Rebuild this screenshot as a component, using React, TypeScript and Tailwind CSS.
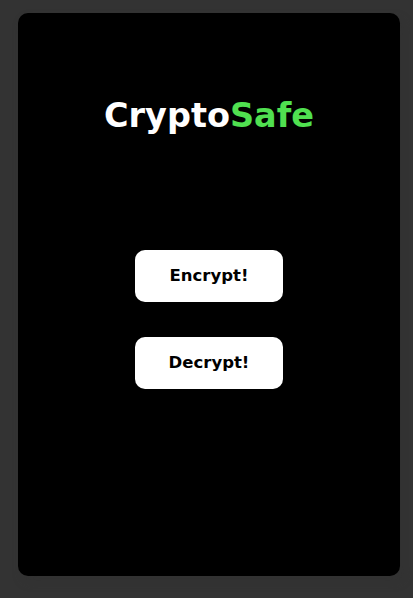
export default function App() {
  return (
    <div className="min-h-screen w-full bg-[#333333] pl-[18px] pt-[13px]" style={{ fontFamily: '"DejaVu Sans", sans-serif' }}>
      <div className="flex h-[563px] w-[382px] flex-col items-center rounded-[10px] bg-black shadow-[4px_6px_8px_rgba(50,50,50,0.6)]">
        {/* Title */}
        <h1 className="mt-[83px] h-[40px] text-[33.5px] font-bold leading-[40px] text-white">
          Crypto<span className="text-[#50e050]">Safe</span>
        </h1>

        {/* Actions */}
        <div className="mt-[114px] flex flex-col gap-[35px]">
          <button className="h-[52px] w-[148px] rounded-[10px] bg-white text-[16.5px] font-bold text-black">
            Encrypt!
          </button>
          <button className="h-[52px] w-[148px] rounded-[10px] bg-white text-[16.5px] font-bold text-black">
            Decrypt!
          </button>
        </div>
      </div>
    </div>
  );
}
